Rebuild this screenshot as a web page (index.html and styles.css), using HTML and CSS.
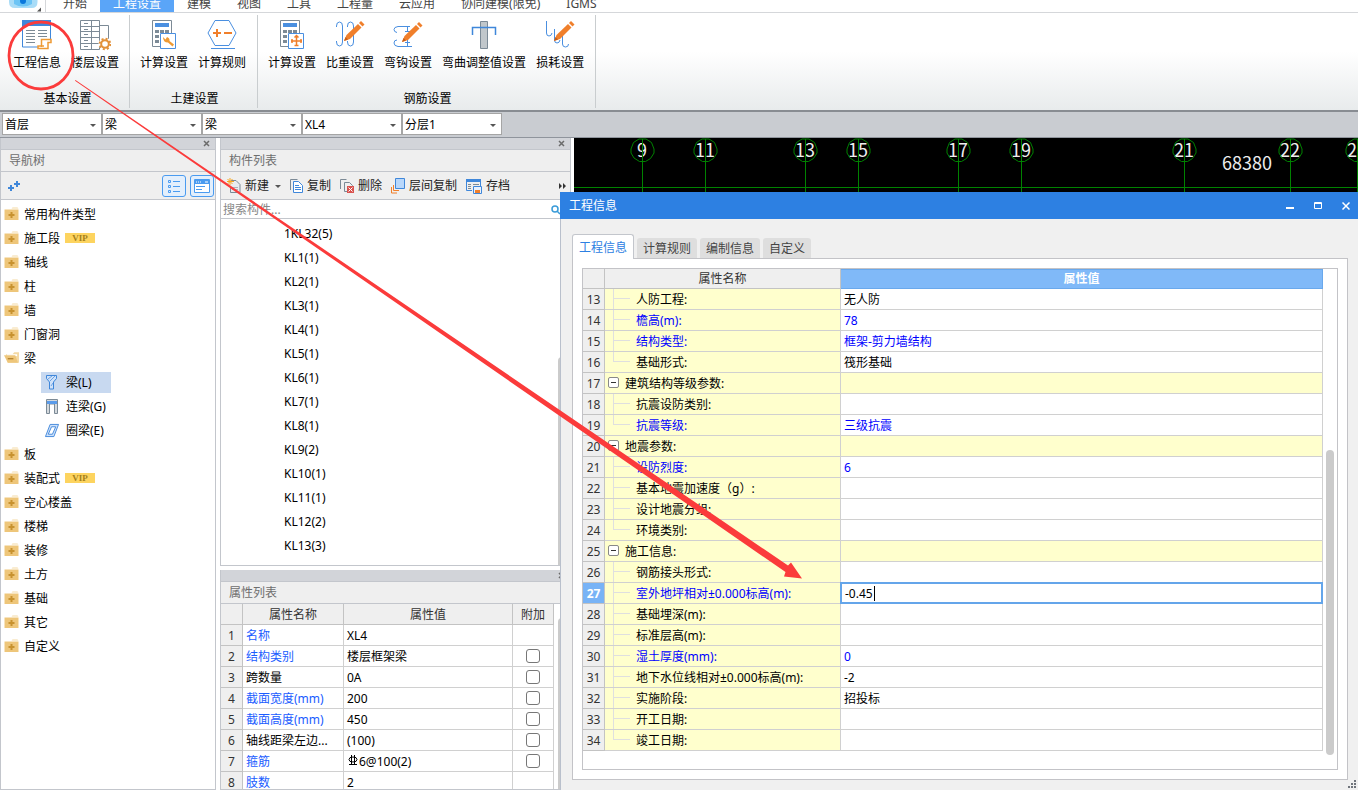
FILE: index.html
```html
<!DOCTYPE html>
<html lang="zh-CN">
<head>
<meta charset="utf-8">
<title>工程信息</title>
<link rel="stylesheet" href="styles.css">
</head>
<body>
<svg class="defs" aria-hidden="true">
  <symbol id="folder" viewBox="0 0 14 13"><path d="M7 1.500 8 .5h5l1 1z" fill="#f3d9a4"/><path d="M0 2.500h14V13H0z" fill="#eec67a"/><path d="M6 5h2v2h2v2H8v2H6V9H4V7h2z" fill="#c8922f"/></symbol>
  <symbol id="folder-open" viewBox="0 0 16 13"><path d="M2 3h7l2-2h5v11H4z" fill="#f3d9a4"/><path d="M3 3h11v2H3z" fill="#fff"/><path d="M0 4h12l3 8H4z" fill="#eec67a"/><path d="M4 7h6v1.500H4z" fill="#b58432"/></symbol>
  <symbol id="close" viewBox="0 0 7 7"><path d="M1 1l5 5M6 1 1 6" stroke="#6b6b6b" stroke-width="1.500"/></symbol>
  <symbol id="pencil" viewBox="0 0 22 22"><path d="M1 21l2.500-6L15 4l3.500 3.500L7 19z" fill="#f07f2b"/><path d="M16 3l2-2 3.500 3.500-2 2z" fill="#f07f2b"/><path d="M1 21l1.500-4 2.500 2.500z" fill="#c95f18"/></symbol>
  <symbol id="calc" viewBox="0 0 24 30"><path d="M.5.500h19v26H.5z" fill="#fff" stroke="#7c8a96"/><path d="M3 3h14v4H3z" fill="#4a8fe0"/><g fill="#7c8a96"><path d="M3 10h4v3H3zM8 10h4v3H8zM13 10h4v3h-4zM3 15h4v3H3zM8 15h4v3H8zM3 20h4v3H3z"/></g><path d="M8.500 13.500h15v15h-15z" fill="#fff" stroke="#4a8fe0"/></symbol>
</svg>

<div class="app">
  <header class="tabs">
    <button class="logo" aria-label="主菜单"><svg width="45" height="12" viewBox="0 0 45 12"><path d="M9 0h28.500v2q0 6-6 6H15q-6 0-6-6z" fill="#a9dcf7"/><path d="M14 0h18v4q-9 5-18 0z" fill="#6cc4f5"/><circle cx="23" cy="1" r="3" fill="#0a77dc"/><path d="M37 11.500h4v-4z" fill="#555"/></svg></button>
    <nav class="tab-list">
      <button class="tab">开始</button><button class="tab on">工程设置</button><button class="tab">建模</button><button class="tab">视图</button><button class="tab">工具</button><button class="tab">工程量</button><button class="tab">云应用</button><button class="tab">协同建模(限免)</button><button class="tab">IGMS</button>
    </nav>
  </header>

  <section class="ribbon">
    <div class="group first">
      <div class="tools">
        <button class="tool"><svg width="32" height="32" viewBox="0 0 32 32"><path d="M1.500 6v22H18M29.500 6v15" fill="none" stroke="#3f87da"/><path d="M1 1h29v6H1z" fill="#3f87da"/><path d="M5 11.500h9M5 14.500h9M5 17.500h9M5 20.500h9M5 23.500h9M17 11.500h9M17 14.500h9M17 17.500h9" stroke="#7c8a96"/><path d="M20.500 28V20.500h9.500v3h-3V29.500H17v-2.500h6" fill="#fff" stroke="#ee9a34" stroke-width="1.500"/></svg>工程信息</button>
        <button class="tool"><svg width="32" height="32" viewBox="0 0 32 32"><path d="M1.500 1.500h19v29h-19zM1.500 7.500h19M1.500 12.500h19M1.500 18.500h19M1.500 24.500h19M9 4.500H5M9 10.500H5M9 15.500H5M9 21.500H5M9 27.500H5M20.500 6.500h9V20" fill="none" stroke="#7c8a96"/><path d="M12.500 1.500v29" stroke="#7c8a96"/><circle cx="26" cy="25" r="6.500" fill="#fff"/><circle cx="26" cy="25" r="3.800" fill="#fff" stroke="#e2913a" stroke-width="2"/><circle cx="26" cy="25" r="5.300" fill="none" stroke="#e2913a" stroke-width="2" stroke-dasharray="2 2.160"/></svg>楼层设置</button>
      </div>
      <div class="caption">基本设置</div>
    </div>
    <div class="group">
      <div class="tools">
        <button class="tool"><svg width="32" height="32" viewBox="0 0 32 32"><use href="#calc" x="4" y="1" width="24" height="30"/><path d="M15 18l2.500 2.500L19 18q3 1 2.500 4l4.500 3.500-1.500 2-4.500-4q-5 0-5-5.500" fill="#ee9a34"/></svg>计算设置</button>
        <button class="tool"><svg width="32" height="32" viewBox="0 0 32 32"><path d="M2 14 9 1.500h14L30 14l-7 12.500H9z" fill="none" stroke="#4a8fe0"/><path d="M5 29.500h24" stroke="#4a8fe0"/><path d="M7 14h8M11 10v8M18 14h8" stroke="#f07f2b" stroke-width="2"/></svg>计算规则</button>
      </div>
      <div class="caption">土建设置</div>
    </div>
    <div class="group">
      <div class="tools">
        <button class="tool"><svg width="32" height="32" viewBox="0 0 32 32"><use href="#calc" x="4" y="1" width="24" height="30"/><path d="M15 22h11M20.500 17v10M18.500 18.500l2-2 2 2M16 20v4M25 20v4M18.500 26.500h4" fill="none" stroke="#f07f2b" stroke-width="1.500"/></svg>计算设置</button>
        <button class="tool"><svg width="32" height="32" viewBox="0 0 32 32"><path d="M2.500 8V7q0-4 3-4t3 4v16q0 4-3 4t-3-4v-1M13.500 8V7q0-4 3-4t3 4v16q0 4-3 4t-3-4v-1" fill="none" stroke="#4a8fe0"/><use href="#pencil" x="9" y="1" width="22" height="22"/></svg>比重设置</button>
        <button class="tool"><svg width="32" height="32" viewBox="0 0 32 32"><path d="M5 13.500Q2 13 2 10.500T6 7.500h12M5 21Q2 21 2 24t4 3.500h14M15.500 7.500v5M15.500 17v10M13 12.500h5M13 23.500h5" fill="none" stroke="#4a8fe0"/><use href="#pencil" x="9" y="2" width="22" height="22"/></svg>弯钩设置</button>
        <button class="tool"><svg width="32" height="32" viewBox="0 0 32 32"><path d="M12.500 2.500h7v27h-7z" fill="#c1c7cb" stroke="#7c8a96"/><path d="M4.500 16V8.500h23V16" fill="none" stroke="#3f87da" stroke-width="1.500"/></svg>弯曲调整值设置</button>
        <button class="tool"><svg width="32" height="32" viewBox="0 0 32 32"><path d="M2.500 2v12q0 3 2.500 3t3-3M10.500 10v11q0 3 2.500 3t3-3M18.500 16v9q0 3 3 3t3-3" fill="none" stroke="#4a8fe0"/><use href="#pencil" x="9" y="1" width="22" height="22"/></svg>损耗设置</button>
      </div>
      <div class="caption">钢筋设置</div>
    </div>
  </section>

  <section class="combos">
    <span class="combo"><select aria-label="楼层"><option>首层</option></select></span>
    <span class="combo"><select aria-label="构件大类"><option>梁</option></select></span>
    <span class="combo"><select aria-label="构件类型"><option>梁</option></select></span>
    <span class="combo"><select aria-label="构件"><option>XL4</option></select></span>
    <span class="combo"><select aria-label="分层"><option>分层1</option></select></span>
  </section>

  <main class="main">
    <aside class="panel nav">
      <div class="strip"><button class="x" aria-label="关闭"><svg width="7" height="7"><use href="#close"/></svg></button></div>
      <h2 class="title">导航树</h2>
      <div class="bar">
        <button class="plain" aria-label="展开"><svg width="14" height="12" viewBox="0 0 14 12"><path d="M0 8h6M3 5v6M6 4h6M9 1v6" stroke="#3f87da" stroke-width="2"/></svg></button>
        <span class="grow"></span>
        <button class="view" aria-label="列表视图"><svg width="14" height="14" viewBox="0 0 14 14"><path d="M1.500 1.500h2v2h-2zM1.500 6.500h2v2h-2zM1.500 11.500h2v2h-2zM6 2.500h7M6 7.500h7M6 12.500h7" fill="none" stroke="#4a9bf0"/></svg></button>
        <button class="view" aria-label="卡片视图"><svg width="16" height="14" viewBox="0 0 16 14"><path d="M.5.500h15v13H.5z" fill="#fff" stroke="#4a9bf0"/><path d="M1 1h14v4H1z" fill="#4a9bf0"/><path d="M2 3h1M4 3h1M6 3h1M11 3h3" stroke="#fff"/><path d="M2 7.500h9M2 10.500h6" stroke="#4a9bf0"/></svg></button>
      </div>
      <ul class="tree">
        <li><svg><use href="#folder"/></svg>常用构件类型</li>
        <li><svg><use href="#folder"/></svg>施工段<b class="vip">VIP</b></li>
        <li><svg><use href="#folder"/></svg>轴线</li>
        <li><svg><use href="#folder"/></svg>柱</li>
        <li><svg><use href="#folder"/></svg>墙</li>
        <li><svg><use href="#folder"/></svg>门窗洞</li>
        <li><svg><use href="#folder-open"/></svg>梁</li>
        <li class="sub"><span class="leaf on"><svg viewBox="0 0 14 15"><path d="M1.500.500h10v3l-3 3.500v7h-4V7l-3-3.500z" fill="#cfe2fa" stroke="#3f87da"/><path d="M3 4l4-3M5 6l5-5M6 11l2-3" stroke="#3f87da" stroke-width=".7"/></svg>梁(L)</span></li>
        <li class="sub"><span class="leaf"><svg viewBox="0 0 14 15"><path d="M1.500 14.500V.5h11v14h-3V5h-5v9.500z" fill="#d4d9dd" stroke="#7c8a96"/><path d="M2 2h10v3H2z" fill="#5a9bea"/></svg>连梁(G)</span></li>
        <li class="sub"><span class="leaf"><svg viewBox="0 0 15 14"><path d="M5.500.500h9l-5 13H.5z" fill="#cfe2fa" stroke="#3f87da"/><path d="M7 3h4.500l-3.500 8H3.500z" fill="#fff" stroke="#3f87da"/></svg>圈梁(E)</span></li>
        <li><svg><use href="#folder"/></svg>板</li>
        <li><svg><use href="#folder"/></svg>装配式<b class="vip">VIP</b></li>
        <li><svg><use href="#folder"/></svg>空心楼盖</li>
        <li><svg><use href="#folder"/></svg>楼梯</li>
        <li><svg><use href="#folder"/></svg>装修</li>
        <li><svg><use href="#folder"/></svg>土方</li>
        <li><svg><use href="#folder"/></svg>基础</li>
        <li><svg><use href="#folder"/></svg>其它</li>
        <li><svg><use href="#folder"/></svg>自定义</li>
      </ul>
    </aside>

    <div class="column">
      <section class="panel comps">
        <div class="strip"><button class="x" aria-label="关闭"><svg width="7" height="7"><use href="#close"/></svg></button></div>
        <h2 class="title">构件列表</h2>
        <div class="bar actions">
          <button class="act"><svg width="14" height="16" viewBox="0 0 14 16"><path d="M4 2.500h5l4 4v8H3.500V8" fill="#e8ecef" stroke="#7c8a96"/><path d="M5 9.500h6M5 11.500h6" stroke="#a9b3bb"/><path d="M3 0v7M0 3.500h7M.5 1l5 5M5.500 1l-5 5" stroke="#f5a623"/></svg>新建<i class="caret"></i></button>
          <button class="act"><svg width="13" height="16" viewBox="0 0 13 16"><path d="M.5 12V1.500h7" fill="none" stroke="#7c8a96"/><path d="M3.500 3.500h5l4 4v7h-9z" fill="#fff" stroke="#3f87da"/><path d="M5 7.500h4M5 9.500h6M5 11.500h6" stroke="#3f87da"/></svg>复制</button>
          <button class="act"><svg width="14" height="16" viewBox="0 0 14 16"><path d="M.5 11V1.500h6M7 13.500H4.500v-9h5l3 3V8" fill="none" stroke="#7c8a96"/><path d="M7 8h7v7H7z" fill="#d9534f"/><path d="M8.500 9.500l4 4M12.500 9.500l-4 4" stroke="#fff"/></svg>删除</button>
          <button class="act"><svg width="14" height="16" viewBox="0 0 14 16"><path d="M.5 9v6H6M2.500 7v5.500H8" fill="none" stroke="#f07f2b"/><path d="M4.500.500h9v10h-9z" fill="#b8d7fb" stroke="#3f87da"/></svg>层间复制</button>
          <button class="act"><svg width="16" height="16" viewBox="0 0 16 16"><path d="M.5 1v11.500H6M14.500 4v4" fill="none" stroke="#3f87da"/><path d="M0 1h15v3H0z" fill="#3f87da"/><path d="M2 6.500h3M2 8.500h3M2 10.500h3M7 6.500h6" stroke="#7c8a96"/><path d="M7.500 8.500h8v7h-8z" fill="#e8f1fd" stroke="#3f87da"/><path d="M9 12h5v3H9z" fill="#f07f2b"/></svg>存档</button>
          <span class="grow"></span>
          <button class="plain" aria-label="更多"><svg width="8" height="6" viewBox="0 0 8 6"><path d="M0 0l3 3-3 3zM4 0l3 3-3 3z" fill="#333"/></svg></button>
        </div>
        <div class="search"><input type="text" aria-label="搜索构件" placeholder="搜索构件..."><svg width="10" height="10" viewBox="0 0 10 10"><circle cx="4" cy="4" r="3" fill="none" stroke="#3a9bd8" stroke-width="1.500"/><path d="M6 6l3 3" stroke="#3a9bd8" stroke-width="1.500"/></svg></div>
        <ul class="comp-list">
          <li>1KL32(5)</li><li>KL1(1)</li><li>KL2(1)</li><li>KL3(1)</li><li>KL4(1)</li><li>KL5(1)</li><li>KL6(1)</li><li>KL7(1)</li><li>KL8(1)</li><li>KL9(2)</li><li>KL10(1)</li><li>KL11(1)</li><li>KL12(2)</li><li>KL13(3)</li>
        </ul>
        <span class="side-thumb"></span>
      </section>

      <section class="panel props">
        <div class="strip"><button class="x" aria-label="关闭"><svg width="7" height="7"><use href="#close"/></svg></button></div>
        <h2 class="title">属性列表</h2>
        <div class="props-body">
        <table class="grid">
          <colgroup><col class="c-no"><col class="c-key"><col class="c-val"><col class="c-add"></colgroup>
          <thead><tr><th></th><th>属性名称</th><th>属性值</th><th>附加</th></tr></thead>
          <tbody>
            <tr><th>1</th><td class="link">名称</td><td>XL4</td><td></td></tr>
            <tr><th>2</th><td class="link">结构类别</td><td>楼层框架梁</td><td class="mid"><input type="checkbox" aria-label="附加 结构类别"></td></tr>
            <tr><th>3</th><td>跨数量</td><td>0A</td><td class="mid"><input type="checkbox" aria-label="附加 跨数量"></td></tr>
            <tr><th>4</th><td class="link">截面宽度(mm)</td><td>200</td><td class="mid"><input type="checkbox" aria-label="附加 截面宽度"></td></tr>
            <tr><th>5</th><td class="link">截面高度(mm)</td><td>450</td><td class="mid"><input type="checkbox" aria-label="附加 截面高度"></td></tr>
            <tr><th>6</th><td>轴线距梁左边...</td><td>(100)</td><td class="mid"><input type="checkbox" aria-label="附加 轴线距梁左边"></td></tr>
            <tr><th>7</th><td class="link">箍筋</td><td><svg class="rebar" width="12" height="11" viewBox="0 0 12 11"><path d="M4.500 0v10M7.500 0v10M2 9.500h8" fill="none" stroke="#000"/><ellipse cx="6" cy="4.500" rx="4" ry="2.500" fill="none" stroke="#000"/></svg>6@100(2)</td><td class="mid"><input type="checkbox" aria-label="附加 箍筋"></td></tr>
            <tr><th>8</th><td class="link">肢数</td><td>2</td><td></td></tr>
          </tbody>
        </table>
        </div>
        <span class="side-thumb low"></span>
      </section>
    </div>

    <section class="canvas">
      <svg width="100%" height="100%">
        <defs><path id="bub" d="M-3.500-11h7L9-7.500 11.500-1v4L8 8.500 3 11.500h-6L-8.500 8-11.500 3v-4L-9-7.500z"/></defs>
        <g class="mark">
          <text x="68" y="19">9</text><text x="131" y="19">11</text><text x="231" y="19">13</text><text x="284" y="19">15</text><text x="384" y="19">17</text><text x="447" y="19">19</text><text x="610" y="19">21</text><text x="716" y="19">22</text><text x="783" y="19">24</text><text x="673" y="32">68380</text>
        </g>
        <g class="axis">
          <path d="M0 49.500h2000M68.500 1v120M131.500 1v120M231.500 1v120M284.500 1v120M384.500 1v120M447.500 1v120M610.500 1v120M716.500 1v120M783.500 1v120"/>
          <use href="#bub" x="68.500" y="12"/><use href="#bub" x="131.500" y="12"/><use href="#bub" x="231.500" y="12"/><use href="#bub" x="284.500" y="12"/><use href="#bub" x="384.500" y="12"/><use href="#bub" x="447.500" y="12"/><use href="#bub" x="610.500" y="12"/><use href="#bub" x="716.500" y="12"/><use href="#bub" x="783.500" y="12"/>
        </g>
      </svg>
    </section>
  </main>

  <section class="dialog" role="dialog" aria-labelledby="dlg">
    <div class="dlg-title"><h1 id="dlg">工程信息</h1>
      <button aria-label="最小化"><svg width="8" height="8" viewBox="0 0 8 8"><path d="M0 6h8" stroke="#fff" stroke-width="2"/></svg></button>
      <button aria-label="最大化"><svg width="8" height="8" viewBox="0 0 8 8"><path d="M.5.500h7v6H.5zM0 1.500h8" fill="none" stroke="#fff"/></svg></button>
      <button aria-label="关闭"><svg width="8" height="8" viewBox="0 0 8 8"><path d="M.5.500l7 7M7.500.500l-7 7" stroke="#fff" stroke-width="1.500"/></svg></button>
    </div>
    <div class="dlg-tabs"><button class="on">工程信息</button><button>计算规则</button><button>编制信息</button><button>自定义</button></div>
    <div class="pane">
      <div class="sheet">
        <table class="grid info">
          <colgroup><col class="i-no"><col class="i-key"><col></colgroup>
          <thead><tr><th></th><th>属性名称</th><th class="sel">属性值</th></tr></thead>
          <tbody>
            <tr><th>13</th><td><i class="br"></i>人防工程:</td><td>无人防</td></tr>
            <tr class="blue"><th>14</th><td><i class="br"></i>檐高(m):</td><td>78</td></tr>
            <tr class="blue"><th>15</th><td><i class="br"></i>结构类型:</td><td>框架-剪力墙结构</td></tr>
            <tr><th>16</th><td><i class="br end"></i>基础形式:</td><td>筏形基础</td></tr>
            <tr class="sec"><th>17</th><td><button class="fold" aria-label="折叠"></button>建筑结构等级参数:</td><td></td></tr>
            <tr><th>18</th><td><i class="br"></i>抗震设防类别:</td><td></td></tr>
            <tr class="blue"><th>19</th><td><i class="br end"></i>抗震等级:</td><td>三级抗震</td></tr>
            <tr class="sec"><th>20</th><td><button class="fold" aria-label="折叠"></button>地震参数:</td><td></td></tr>
            <tr class="blue"><th>21</th><td><i class="br"></i>设防烈度:</td><td>6</td></tr>
            <tr><th>22</th><td><i class="br"></i>基本地震加速度（g）:</td><td></td></tr>
            <tr><th>23</th><td><i class="br"></i>设计地震分组:</td><td></td></tr>
            <tr><th>24</th><td><i class="br end"></i>环境类别:</td><td></td></tr>
            <tr class="sec"><th>25</th><td><button class="fold" aria-label="折叠"></button>施工信息:</td><td></td></tr>
            <tr><th>26</th><td><i class="br"></i>钢筋接头形式:</td><td></td></tr>
            <tr class="blue cur"><th>27</th><td><i class="br"></i><label for="level">室外地坪相对±0.000标高(m):</label></td><td class="edit"><input id="level" type="text" value="-0.45"><i class="cursor"></i></td></tr>
            <tr><th>28</th><td><i class="br"></i>基础埋深(m):</td><td></td></tr>
            <tr><th>29</th><td><i class="br"></i>标准层高(m):</td><td></td></tr>
            <tr class="blue"><th>30</th><td><i class="br"></i>湿土厚度(mm):</td><td>0</td></tr>
            <tr><th>31</th><td><i class="br"></i>地下水位线相对±0.000标高(m):</td><td>-2</td></tr>
            <tr><th>32</th><td><i class="br"></i>实施阶段:</td><td>招投标</td></tr>
            <tr><th>33</th><td><i class="br"></i>开工日期:</td><td></td></tr>
            <tr><th>34</th><td><i class="br end"></i>竣工日期:</td><td></td></tr>
          </tbody>
        </table>
        <span class="thumb"></span>
      </div>
    </div>
    <svg class="grip" width="8" height="8" viewBox="0 0 8 8"><path d="M6 0h2v2H6zM3 3h2v2H3zM6 3h2v2H6zM0 6h2v2H0zM3 6h2v2H3zM6 6h2v2H6z" fill="#70757c"/></svg>
  </section>

  <svg class="notes" width="820" height="600" viewBox="0 0 820 600" aria-hidden="true">
    <ellipse cx="41" cy="55.500" rx="32" ry="33.500" fill="none" stroke="#fb3b3b" stroke-width="2.800"/>
    <path d="M75 80.800 75.500 80 788 565.500 791 562.500 802 578.500 784 576.500 785.500 572z" fill="#fb3b3b"/>
  </svg>
</div>
</body>
</html>
```
FILE: styles.css
```css
* { box-sizing: border-box; }
body { margin: 0; font: 12px/18px "Noto Sans", "Noto Sans CJK SC", sans-serif; color: #000; background: #fff; }
button, input, select { font: inherit; color: inherit; margin: 0; padding: 0; border: 0; background: none; border-radius: 0; }
h1, h2 { margin: 0; font-size: 12px; font-weight: 400; }
ul { list-style: none; margin: 0; padding: 0; }
svg { flex: none; display: block; }
.defs { position: absolute; width: 0; height: 0; }
.grow { flex: 1; }
.app { position: relative; display: flex; flex-direction: column; height: 100vh; overflow: hidden; }

/* menu tabs */
.tabs { display: flex; align-items: flex-end; flex: none; height: 13px; overflow: hidden; border-bottom: 1px solid #d5d7da; }
.logo { width: 46px; height: 12px; margin-right: 4px; border-right: 1px solid #d5d7da; }
.tab-list { display: flex; align-items: flex-end; }
.tab { padding: 0 13px; height: 16px; line-height: 16px; color: #444; }
.tab.on { background: #5aa5f8; color: #fff; }

/* ribbon */
.ribbon { display: flex; flex: none; height: 99px; padding-top: 2px; background: linear-gradient(#fff 40%, #e8ebec); border-bottom: 2px solid #888c92; }
.group { display: flex; flex-direction: column; padding: 4px 6px 0 5px; margin-bottom: 2px; border-right: 1px solid #c9cdcf; }
.group.first { padding-left: 8px; padding-right: 5px; }
.tools { display: flex; flex: 1; align-items: flex-start; }
.tool { display: flex; flex-direction: column; align-items: center; gap: 3px; padding: 0 5px; white-space: nowrap; }
.caption { padding-left: 3px; text-align: center; }

/* combo boxes */
.combos { display: flex; flex: none; height: 26px; padding: 1px 0 2px 2px; background: #c9ccd1; border-bottom: 1px solid #8f949c; }
.combo { position: relative; width: 100px; background: #fff; border: 1px solid #a5a5a5; }
.combo select { appearance: none; width: 100%; height: 100%; padding: 2px 0 0 2px; }
.combo::after { content: ""; position: absolute; right: 5px; top: 10px; border: 3px solid transparent; border-top-color: #555; border-bottom: 0; }

/* docked panels */
.main { display: flex; flex: 1; min-height: 0; }
.panel { position: relative; display: flex; flex-direction: column; border: 1px solid #c3c6cc; border-top: 0; background: #fff; min-height: 0; overflow: hidden; }
.strip { display: flex; justify-content: flex-end; align-items: center; flex: none; height: 12px; padding-right: 5px; background: #d2d4d9; border-bottom: 1px solid #c3c6cc; }
.x { display: flex; }
.title { flex: none; height: 22px; padding: 1px 0 0 8px; line-height: 20px; color: #6e6e6e; background: #efefef; border-bottom: 1px solid #c3c6cc; }
.bar { display: flex; align-items: center; flex: none; height: 28px; background: #efefef; border-bottom: 1px solid #c3c6cc; }
.plain { display: flex; }
.nav { width: 216px; margin-right: 4px; flex: none; }
.nav .bar { gap: 4px; padding: 0 1px 0 7px; }
.view { display: flex; align-items: center; justify-content: center; width: 24px; height: 22px; border: 1px solid #4a9bf0; border-radius: 3px; background: #e3effc; }
.tree { padding-top: 2px; }
.tree li { display: flex; align-items: center; height: 24px; padding: 2px 0 0 3px; }
.tree li > svg { width: 15px; height: 13px; margin: 0 5px 3px 0; }
.vip { width: 30px; height: 10px; margin: 0 0 2px 5px; background: #fdd45f; color: #a57f1c; font: 700 9px/10px "Liberation Serif", serif; text-align: center; }
.tree .sub { padding: 0 0 0 40px; }
.leaf { display: flex; align-items: center; gap: 7px; width: 70px; height: 21px; padding: 1px 0 0 4px; white-space: nowrap; }
.leaf svg { width: 14px; height: 15px; }
.leaf.on { background: #c8d9f0; }

.column { display: flex; flex-direction: column; width: 351px; flex: none; gap: 4px; }
.comps { flex: 1; }
.actions { padding: 1px 3px 0 6px; color: #222; }
.act { display: flex; align-items: center; gap: 4px; margin-right: 9px; white-space: nowrap; }
.caret { margin: 0 0 0 2px; border: 3px solid transparent; border-top-color: #555; border-bottom: 0; }
.search { display: flex; align-items: center; flex: none; height: 19px; padding: 1px 9px 0 2px; border-bottom: 1px solid #c3c6cc; }
.search input { flex: 1; min-width: 0; outline: 0; }
.search input::placeholder { color: #888; }
.comp-list { padding: 3px 0 0 63px; }
.comp-list li { height: 24px; line-height: 24px; }
.side-thumb { position: absolute; left: 337px; top: 219px; bottom: 0; width: 8px; border-radius: 4px 4px 0 0; background: #cbcbcb; }
.side-thumb.low { top: 48px; }
.props { flex: none; height: 220px; }
.props-body { overflow: hidden; }

/* grids */
.grid { border-collapse: separate; border-spacing: 0; table-layout: fixed; width: 333px; }
.grid th, .grid td { height: 21px; padding: 2px 3px 0; border: solid #d0d0d0; border-width: 0 1px 1px 0; white-space: nowrap; overflow: hidden; line-height: 18px; text-align: left; }
.grid th { font-weight: 400; text-align: center; color: #333; background: #efefef; border-color: #c3c3c3; padding: 2px 0 0; }
.grid td.mid { text-align: center; padding: 0; }
.grid .link { color: #1a5cff; }
.c-no { width: 22px; } .c-key { width: 101px; } .c-val { width: 169px; } .c-add { width: 41px; }
.grid input[type=checkbox] { appearance: none; display: block; width: 14px; height: 14px; margin: 0 auto; border: 1px solid #777; border-radius: 3px; background: #fff; }
.rebar { display: inline-block; vertical-align: 0; }

.canvas { flex: 1; margin-left: 3px; background: #000; overflow: hidden; }
.mark { fill: #eee; font: 18px "Noto Sans CJK SC", sans-serif; text-anchor: middle; }
.axis { fill: none; stroke: #008200; }

/* dialog window */
.dialog { position: absolute; left: 560px; right: 0; top: 192px; bottom: 0; display: flex; flex-direction: column; background: #f0f0f0; border-left: 1px solid #b9c0cc; }
.dlg-title { display: flex; align-items: center; gap: 20px; flex: none; height: 27px; margin-left: -1px; padding: 0 8px 0 9px; background: #2d80e2; color: #fff; }
.dlg-title h1 { flex: 1; }
.dlg-title button { display: flex; }
.dlg-tabs { display: flex; align-items: flex-end; gap: 3px; flex: none; height: 39px; padding-left: 11px; }
.dlg-tabs button { height: 20px; padding: 1px 6px 0; border-radius: 3px 3px 0 0; background: #dedede; color: #444; }
.dlg-tabs .on { position: relative; z-index: 1; height: 25px; margin-bottom: -1px; background: #fff; border: 1px solid #c3c6cc; border-bottom: 0; color: #2d80e2; }
.pane { flex: 1; min-height: 0; margin: 0 10px 10px 11px; padding: 9px; border: 1px solid #c3c3c7; background: #fff; }
.sheet { position: relative; height: 100%; padding-right: 14px; border: 1px solid #c3c3c7; overflow: hidden; }
.info { width: 100%; }
.i-no { width: 22px; } .i-key { width: 236px; }
.info thead th { height: 20px; padding-top: 1px; }
.info thead .sel { padding: 0; background: #80b9f8; color: #fff; font-weight: 700; border: 1px solid #69a8ec; border-left: 0; }
.info td:nth-child(2) { background: #ffffcd; padding: 2px 0 0; }
.info .sec td { background: #ffffcd; }
.blue td { color: #00f; }
.br { display: inline-block; vertical-align: top; width: 25px; height: 20px; margin: -2px 6px 0 0; background: linear-gradient(#dfdfdf, #dfdfdf) 8px 0 / 1px 100% no-repeat, linear-gradient(#dfdfdf, #dfdfdf) 8px 9px / 17px 1px no-repeat; }
.br.end { background-size: 1px 10px, 17px 1px; }
.fold { position: relative; display: inline-block; vertical-align: top; width: 11px; height: 11px; margin: 2px 6px 0 3px; border: 1px solid #888; border-radius: 2px; background: #fff; }
.fold::after { content: ""; position: absolute; left: 2px; right: 2px; top: 4px; height: 1px; background: #333; }
.info .cur th { background: #78b3f6; color: #fff; font-weight: 700; }
.info .edit { position: relative; padding: 0; overflow: visible; color: #000; border-color: #64a5ea; }
.edit input { display: block; width: 100%; height: 20px; padding: 1px 0 0 3px; border: 1px solid #64a5ea; box-shadow: 0 0 0 1px #64a5ea; outline: 0; }
.cursor { position: absolute; left: 33px; top: 3px; width: 1px; height: 15px; background: #000; }
.thumb { position: absolute; right: 3px; top: 181px; bottom: 14px; width: 8px; border-radius: 4px; background: #cbcbcb; }
.grip { position: absolute; right: 2px; bottom: 2px; }

.notes { position: absolute; left: 0; top: 0; pointer-events: none; }
```
